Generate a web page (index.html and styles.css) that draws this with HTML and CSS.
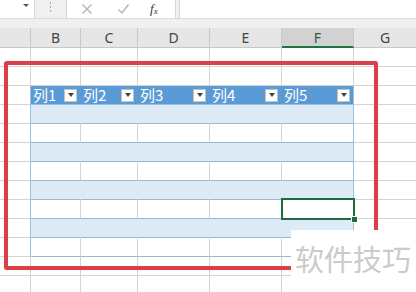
FILE: index.html
```html
<!DOCTYPE html>
<html lang="zh-CN">
<head>
  <meta charset="UTF-8" />
  <title>表格</title>
  <link rel="stylesheet" href="styles.css">
</head>
<body>

  <div class="toolbar">
    <div class="namebox"><span class="caret"></span></div>
    <div class="grip"><i></i><i></i><i></i></div>
    <div class="fxbox">
      <svg class="ico" width="12" height="12" viewBox="0 0 12 12"><path d="M1.5 1.5 L10.5 10.5 M10.5 1.5 L1.5 10.5" stroke="#b4b4b4" stroke-width="1.3" fill="none"/></svg>
      <svg class="ico" width="13" height="12" viewBox="0 0 13 12"><path d="M1.5 6.5 L5 10 L11.5 1.5" stroke="#b4b4b4" stroke-width="1.4" fill="none"/></svg>
      <span class="fx">f<sub>x</sub></span>
    </div>
    <div class="formula"></div>
  </div>
  <div class="gap"></div>

  <div class="sheet">
    <div class="row colhead">
      <div class="c ca"></div><div class="c cb">B</div><div class="c cc">C</div><div class="c cd">D</div><div class="c ce">E</div><div class="c cf sel">F</div><div class="c cg">G</div>
    </div>

    <div class="row"><div class="c ca"></div><div class="c cb"></div><div class="c cc"></div><div class="c cd"></div><div class="c ce"></div><div class="c cf"></div><div class="c cg"></div></div>
    <div class="row"><div class="c ca"></div><div class="c cb"></div><div class="c cc"></div><div class="c cd"></div><div class="c ce"></div><div class="c cf"></div><div class="c cg"></div></div>

    <!-- 表格标题行 -->
    <div class="row">
      <div class="c ca tl"></div>
      <div class="c cb th"><span>列1</span><b class="dd"></b></div>
      <div class="c cc th"><span>列2</span><b class="dd"></b></div>
      <div class="c cd th"><span>列3</span><b class="dd"></b></div>
      <div class="c ce th"><span>列4</span><b class="dd"></b></div>
      <div class="c cf th last"><span>列5</span><b class="dd"></b></div>
      <div class="c cg"></div>
    </div>

    <div class="row"><div class="c ca tl"></div><div class="c cb tb band"></div><div class="c cc tb band"></div><div class="c cd tb band"></div><div class="c ce tb band"></div><div class="c cf tb band last"></div><div class="c cg"></div></div>
    <div class="row"><div class="c ca tl"></div><div class="c cb tb"></div><div class="c cc tb"></div><div class="c cd tb"></div><div class="c ce tb"></div><div class="c cf tb last"></div><div class="c cg"></div></div>
    <div class="row"><div class="c ca tl"></div><div class="c cb tb band"></div><div class="c cc tb band"></div><div class="c cd tb band"></div><div class="c ce tb band"></div><div class="c cf tb band last"></div><div class="c cg"></div></div>
    <div class="row"><div class="c ca tl"></div><div class="c cb tb"></div><div class="c cc tb"></div><div class="c cd tb"></div><div class="c ce tb"></div><div class="c cf tb last"></div><div class="c cg"></div></div>
    <div class="row"><div class="c ca tl"></div><div class="c cb tb band"></div><div class="c cc tb band"></div><div class="c cd tb band"></div><div class="c ce tb band"></div><div class="c cf tb band last"></div><div class="c cg"></div></div>
    <div class="row"><div class="c ca tl"></div><div class="c cb tb"></div><div class="c cc tb"></div><div class="c cd tb"></div><div class="c ce tb"></div><div class="c cf tb last"></div><div class="c cg"></div></div>
    <div class="row"><div class="c ca tl"></div><div class="c cb tb band"></div><div class="c cc tb band"></div><div class="c cd tb band"></div><div class="c ce tb band"></div><div class="c cf tb band last"></div><div class="c cg"></div></div>
    <div class="row"><div class="c ca tl"></div><div class="c cb tb"></div><div class="c cc tb"></div><div class="c cd tb"></div><div class="c ce tb"></div><div class="c cf tb last"></div><div class="c cg"></div></div>

    <div class="row"><div class="c ca"></div><div class="c cb"></div><div class="c cc"></div><div class="c cd"></div><div class="c ce"></div><div class="c cf"></div><div class="c cg"></div></div>
    <div class="row"><div class="c ca"></div><div class="c cb"></div><div class="c cc"></div><div class="c cd"></div><div class="c ce"></div><div class="c cf"></div><div class="c cg"></div></div>

    <!-- 选中单元格 -->
    <div class="cursor"><i class="handle"></i></div>
    <!-- 红色标注框 -->
    <div class="mark"></div>
  </div>

  <div class="watermark">软件技巧</div>

</body>
</html>
```

FILE: styles.css
```css
* {
  margin: 0;
  padding: 0;
  box-sizing: border-box;
}
body {
  width: 416px;
  height: 292px;
  overflow: hidden;
  background: #ffffff;
  font-family: "Noto Sans", "Noto Sans CJK SC", sans-serif;
  position: relative;
}

/* Formula bar */
.toolbar {
  height: 19px;
  display: flex;
  background: #f0f0f0;
  border-bottom: 1px solid #dadada;
}
.namebox {
  width: 35px;
  height: 18px;
  background: #fff;
  border-right: 1px solid #d6d6d6;
  position: relative;
}
.caret {
  position: absolute;
  left: 23px;
  top: 4px;
  border-left: 3px solid transparent;
  border-right: 3px solid transparent;
  border-top: 3px solid #555;
}
.grip {
  width: 31px;
  display: flex;
  flex-direction: column;
  align-items: center;
  gap: 2px;
  padding-top: 2px;
}
.grip i {
  width: 1px;
  height: 2px;
  background: #a8a8a8;
}
.fxbox {
  width: 110px;
  height: 18px;
  background: #fff;
  border-left: 1px solid #d6d6d6;
  border-right: 1px solid #d6d6d6;
  display: flex;
  align-items: center;
  padding-left: 14px;
}
.fxbox .ico:first-child {
  margin-right: 24px;
}
.fxbox .ico + .ico {
  margin-right: 20px;
}
.fx {
  font-family: "Liberation Serif", serif;
  font-style: italic;
  font-size: 13px;
  color: #333;
  line-height: 1;
}
.fx sub {
  font-size: 9px;
  vertical-align: -1px;
}
.formula {
  flex: 1;
  margin-left: 3px;
  height: 18px;
  background: #fff;
  border-left: 1px solid #d6d6d6;
}
.gap {
  height: 9px;
  background: #f0f0f0;
}

/* Sheet grid */
.sheet {
  position: relative;
}
.row {
  display: flex;
  height: 19px;
}
.c {
  flex: none;
  height: 19px;
  border-right: 1px solid #d4d4d4;
  border-bottom: 1px solid #d4d4d4;
}
.ca { width: 31px; }
.cb { width: 50px; }
.cc { width: 57px; }
.cd { width: 72px; }
.ce { width: 72px; }
.cf { width: 72px; }
.cg { width: 63px; }

.colhead {
  height: 20px;
}
.colhead .c {
  height: 20px;
  background: #e6e6e6;
  border-right-color: #c8c8c8;
  border-bottom-color: #c8c8c8;
  font-size: 14px;
  line-height: 19px;
  text-align: center;
  color: #444;
}
.colhead .sel {
  background: #d2d2d2;
  border-bottom: 2px solid #217346;
  color: #2f5a3f;
}

/* Table style */
.tl {
  border-right-color: #9bc2e6;
}
.th {
  background: #5b9bd5;
  border-right-color: #5b9bd5;
  border-bottom-color: #9bc2e6;
  display: flex;
  align-items: center;
  justify-content: space-between;
  padding: 0 3px 0 2px;
  color: #fff;
  font-family: "Noto Sans CJK SC", sans-serif;
  font-size: 15px;
  line-height: 18px;
}
.dd {
  width: 13px;
  height: 13px;
  background: #fff;
  border: 1px solid #c4c4c4;
  display: flex;
  align-items: center;
  justify-content: center;
}
.dd::after {
  content: "";
  border-left: 3px solid transparent;
  border-right: 3px solid transparent;
  border-top: 4px solid #444;
}
.tb {
  border-bottom-color: #9bb8d3;
}
.band {
  background: #ddebf7;
  border-right-color: #ddebf7;
}
.last {
  border-right-color: #9bc2e6;
}

/* Overlays */
.cursor {
  position: absolute;
  left: 281px;
  top: 170px;
  width: 74px;
  height: 22px;
  border: 2px solid #1e6b41;
}
.handle {
  position: absolute;
  right: -5px;
  bottom: -5px;
  width: 7px;
  height: 7px;
  background: #1e6b41;
  border: 1px solid #fff;
}
.mark {
  position: absolute;
  left: 4px;
  top: 33px;
  width: 374px;
  height: 209px;
  border: 4px solid #d9404a;
  border-radius: 3px;
  box-shadow: 0 0 1px rgba(217, 64, 74, 0.5);
}
.watermark {
  position: absolute;
  left: 291px;
  top: 230px;
  right: 0;
  bottom: 0;
  background: #fff;
  color: #cbcbcb;
  font-family: "Noto Sans CJK SC", sans-serif;
  font-size: 29px;
  line-height: 1;
  padding: 14px 0 0 4px;
  white-space: nowrap;
}
```
